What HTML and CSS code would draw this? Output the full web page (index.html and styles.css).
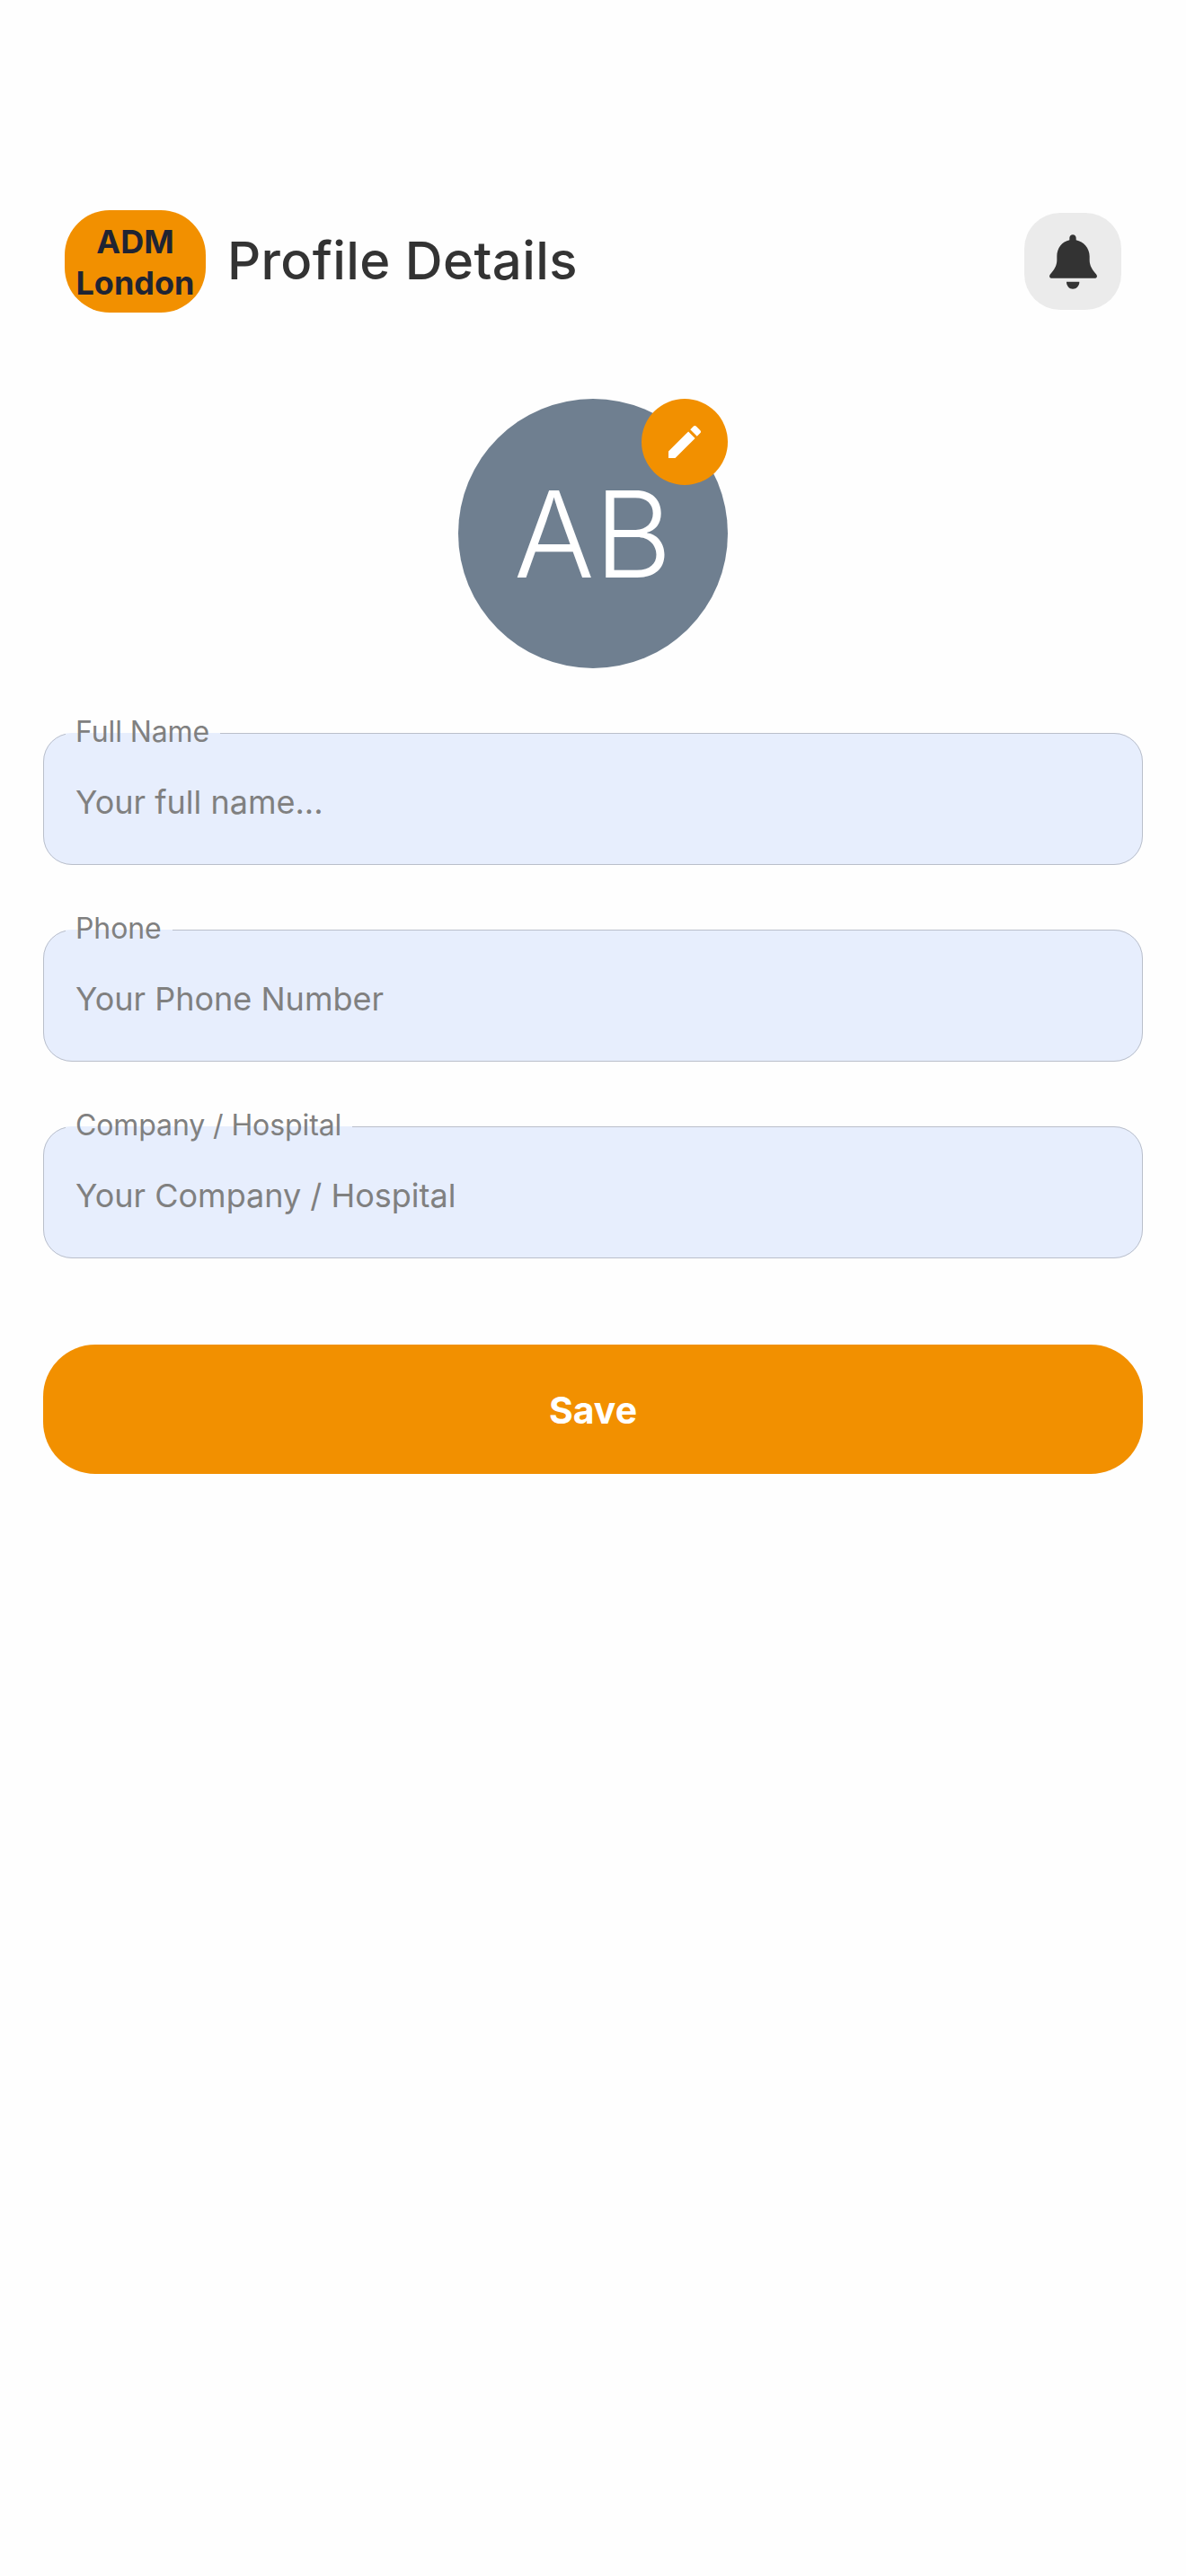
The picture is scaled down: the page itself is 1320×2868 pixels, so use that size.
FILE: index.html
```html
<!DOCTYPE html>
<html lang="en">
<head>
    <meta charset="UTF-8">
    <meta name="viewport" content="width=device-width, initial-scale=1.0">
    <title>Profile Details</title>
    <link rel="stylesheet" href="styles.css">
</head>
<body>

<div class="container">
    <header class="top-bar">
        <div class="logo">ADM<br>London</div>
        <h1>Profile Details</h1>
        <button class="bell-btn" type="button" aria-label="Notifications">
            <svg width="53" height="61" viewBox="0 0 159 182">
                <path d="M78 0c-6 0-11 5-11 11v7C42 23 25 45 25 72V85C25 105 15 118 3 132C-3 139 1 146 9 146H150C158 146 162 139 156 132C144 118 134 105 134 85V72C134 45 114 23 89 18V11C89 5 84 0 78 0Z"/>
                <path d="M57 158H100C100 172 90 182 78 182C66 182 57 172 57 158Z"/>
            </svg>
        </button>
    </header>

    <div class="avatar">
        <span>AB</span>
        <button class="edit-btn" type="button" aria-label="Edit picture">
            <svg width="48" height="48" viewBox="0 0 24 24">
                <path d="M3 17.25V21h3.75L17.81 9.94l-3.75-3.75L3 17.25zM20.71 7.04c.39-.39.39-1.02 0-1.41l-2.34-2.34c-.39-.39-1.02-.39-1.41 0l-1.83 1.83 3.75 3.75 1.83-1.83z"/>
            </svg>
        </button>
    </div>

    <form class="profile-form">
        <fieldset class="field">
            <legend>Full Name</legend>
            <input type="text" placeholder="Your full name...">
        </fieldset>
        <fieldset class="field">
            <legend>Phone</legend>
            <input type="text" placeholder="Your Phone Number">
        </fieldset>
        <fieldset class="field">
            <legend>Company / Hospital</legend>
            <input type="text" placeholder="Your Company / Hospital">
        </fieldset>
        <button class="save-btn" type="submit">Save</button>
    </form>
</div>

</body>
</html>
```

FILE: styles.css
```css
* {
    box-sizing: border-box;
    margin: 0;
    padding: 0;
    font-family: Inter, sans-serif;
}

body {
    background-color: #fefefe;
}

.container {
    padding: 234px 48px 0;
}

.top-bar {
    display: flex;
    align-items: center;
    padding: 0 24px 0 24px;
}

.logo {
    width: 157px;
    height: 114px;
    border-radius: 50px;
    background-color: #f29000;
    color: #1f2433;
    font-size: 36px;
    font-weight: 700;
    line-height: 46px;
    text-align: center;
    padding-top: 12px;
}

h1 {
    flex: 1;
    margin-left: 24px;
    font-size: 58px;
    font-weight: 500;
    letter-spacing: 0.4px;
    color: #333;
    margin-top: -2px;
}

.bell-btn {
    width: 108px;
    height: 108px;
    border: none;
    border-radius: 40px;
    background-color: #ebebeb;
    display: flex;
    align-items: center;
    justify-content: center;
}

.bell-btn svg {
    fill: #333;
}

.avatar {
    position: relative;
    width: 300px;
    height: 300px;
    margin: 96px auto 0;
    border-radius: 50%;
    background-color: #6f7f90;
    color: white;
    font-family: "Open Sans", sans-serif;
    font-size: 133px;
    font-weight: 300;
    display: flex;
    align-items: center;
    justify-content: center;
}

.edit-btn {
    position: absolute;
    top: 0;
    right: 0;
    width: 96px;
    height: 96px;
    border: none;
    border-radius: 50%;
    background-color: #f29000;
    display: flex;
    align-items: center;
    justify-content: center;
}

.edit-btn svg {
    fill: white;
}

.profile-form {
    margin-top: 52px;
}

.field {
    height: 167px;
    margin-bottom: 52px;
    padding: 0 24px;
    border: 1px solid #babfca;
    border-radius: 32px;
    background-color: #e7eefd;
}

.field legend {
    padding: 0 12px 2px 11px;
    font-size: 32px;
    letter-spacing: -0.1px;
    line-height: 38px;
    color: #808080;
}

.field input {
    display: block;
    width: 100%;
    height: 113px;
    padding-left: 11px;
    border: none;
    outline: none;
    background: transparent;
    font-size: 36px;
    color: #333;
}

.field input::placeholder {
    color: #808080;
    opacity: 1;
}

.save-btn {
    display: block;
    width: 100%;
    height: 144px;
    margin-top: 96px;
    padding-top: 2px;
    border: none;
    border-radius: 58px;
    background-color: #f29000;
    color: white;
    font-size: 41px;
    font-weight: 700;
}
```
